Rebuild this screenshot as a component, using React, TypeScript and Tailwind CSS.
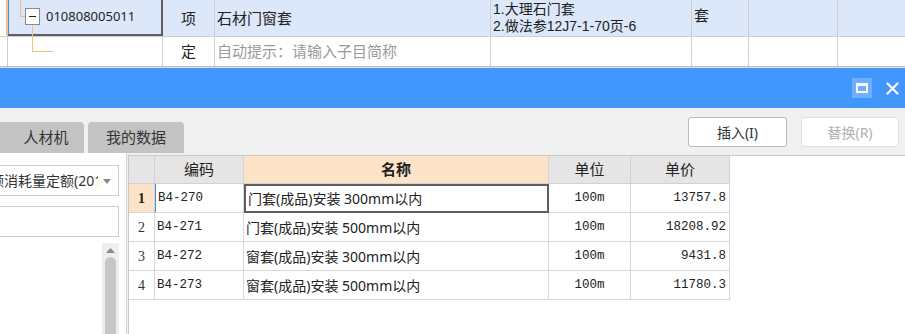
import React from "react";

const rows = [
  { no: "1", code: "B4-270", name: "门套(成品)安装 300mm以内", unit: "100m", price: "13757.8" },
  { no: "2", code: "B4-271", name: "门套(成品)安装 500mm以内", unit: "100m", price: "18208.92" },
  { no: "3", code: "B4-272", name: "窗套(成品)安装 300mm以内", unit: "100m", price: "9431.8" },
  { no: "4", code: "B4-273", name: "窗套(成品)安装 500mm以内", unit: "100m", price: "11780.3" },
];

const cjk = "font-['Noto_Sans','Noto_Sans_CJK_SC',sans-serif]";
const mono = "font-['Liberation_Mono','Noto_Sans_CJK_SC',monospace]";

const TreeLines = () => (
  <svg className="absolute left-0 top-0 pointer-events-none" width="60" height="68" viewBox="0 0 60 68">
    <line x1="20.5" y1="0" x2="20.5" y2="16.5" stroke="#f6bd7c" />
    <line x1="20" y1="16.5" x2="25" y2="16.5" stroke="#f6bd7c" />
    <rect x="25.5" y="8.5" width="14" height="16" fill="#fff" stroke="#8a8a8a" />
    <line x1="29" y1="16.5" x2="36" y2="16.5" stroke="#222" />
    <line x1="32.5" y1="25" x2="32.5" y2="51.5" stroke="#f6bd7c" />
    <line x1="32" y1="51.5" x2="53" y2="51.5" stroke="#f6bd7c" />
  </svg>
);

export default function App() {
  return (
    <div className={`relative w-[905px] h-[334px] overflow-hidden bg-[#f0f0f0] flex flex-col text-[#222] ${cjk}`}>
      {/* upper list */}
      <div className="relative bg-white">
        <div className="grid grid-cols-[8px_155px_52px_276px_201px_57px_89px_1fr] h-[37px] bg-[#dce8fa] border-b border-[#cfcfcf]">
          <div className="bg-white border-r-2 border-[#f6c189]" />
          <div className="border-l border-[#3b8fe8] border-r-2 border-b-2 border-r-[#5e5e5e] border-b-[#5e5e5e] flex items-center pl-[37px] text-[13px]">
            010808005011
          </div>
          <div className="border-r border-[#cfcfcf] flex items-center justify-center text-[15px]">项</div>
          <div className="border-r border-[#cfcfcf] flex items-center pl-[2px] text-[15px]">石材门窗套</div>
          <div className="border-r border-[#cfcfcf] overflow-hidden pl-[2px] pt-[1px] font-['Liberation_Sans','Noto_Sans_CJK_SC',sans-serif] text-[14px] leading-[17px] whitespace-nowrap">
            1.大理石门套
            <br />
            2.做法参12J7-1-70页-6
          </div>
          <div className="border-r border-[#cfcfcf] pl-[2px] pt-[4px] text-[15px]">套</div>
          <div className="border-r border-[#cfcfcf]" />
          <div />
        </div>
        <div className="grid grid-cols-[8px_155px_52px_276px_201px_57px_89px_1fr] h-[30px] border-b border-[#bdbdbd]">
          <div className="border-r border-[#cfcfcf]" />
          <div className="border-r border-[#cfcfcf]" />
          <div className="border-r border-[#cfcfcf] flex items-center justify-center text-[15px]">定</div>
          <div className="border-r border-[#cfcfcf] flex items-center pl-[2px] text-[15px] text-[#9a9a9a]">
            自动提示：请输入子目简称
          </div>
          <div className="border-r border-[#cfcfcf]" />
          <div className="border-r border-[#cfcfcf]" />
          <div className="border-r border-[#cfcfcf]" />
          <div />
        </div>
        <TreeLines />
      </div>
      <div className="h-[1px] bg-[#dfe6ee]" />

      {/* dialog title bar */}
      <div className="h-[40px] bg-[#4197fc] flex items-center justify-end pr-[5px] gap-[14px]">
        <div className="w-[20px] h-[20px] bg-[#6cb0fd] flex items-center justify-center">
          <div className="w-[12px] h-[10px] border-2 border-t-[3px] border-white" />
        </div>
        <svg width="13" height="13" viewBox="0 0 13 13" className="mr-[1px]">
          <path d="M1.5 1.5 L11.5 11.5 M11.5 1.5 L1.5 11.5" stroke="#fff" strokeWidth="2.2" strokeLinecap="round" />
        </svg>
      </div>

      {/* toolbar */}
      <div className="h-[45px] flex items-end justify-between">
        <div className="flex gap-[4px]">
          <div className="w-[84px] h-[31px] bg-[#c3c3c3] rounded-tr-[4px] flex items-center justify-center pl-[8px] text-[15px] text-[#333]">
            人材机
          </div>
          <div className="w-[96px] h-[31px] bg-[#c3c3c3] rounded-t-[4px] flex items-center justify-center text-[15px] text-[#333]">
            我的数据
          </div>
        </div>
        <div className="flex gap-[14px] self-start mt-[9px] pr-[6px]">
          <button className="w-[99px] h-[30px] bg-white border border-[#bcbcbc] rounded-[3px] text-[14px] text-[#333]">
            插入(I)
          </button>
          <button className="w-[98px] h-[30px] bg-white border border-[#e0e0e0] rounded-[3px] text-[14px] text-[#b0b0b0]">
            替换(R)
          </button>
        </div>
      </div>

      {/* body */}
      <div className="flex-1 flex min-h-0">
        <div className="w-[127px] bg-white border-r border-[#d4d4d4] flex flex-col pt-[12px]">
          <div className="w-[119px] h-[31px] border border-[#cdcdcd] border-l-0 flex items-center overflow-hidden relative">
            <div className="w-[98px] overflow-hidden whitespace-nowrap text-[14px] text-[#333]">
              <span className="-ml-[10px] inline-block">额消耗量定额(2014)</span>
            </div>
            <svg width="8" height="5" viewBox="0 0 8 5" className="absolute right-[7px] top-[13px]">
              <path d="M0 0 H8 L4 5 Z" fill="#8a8a8a" />
            </svg>
          </div>
          <div className="mt-[10px] w-[119px] h-[31px] border border-[#cdcdcd] border-l-0" />
          <div className="flex-1 flex justify-end pr-[7px] mt-[6px]">
            <div className="w-[17px] bg-[#eeeeee] flex flex-col items-center">
              <svg width="9" height="5" viewBox="0 0 9 5" className="mt-[5px]">
                <path d="M0 5 L4.5 0 L9 5 Z" fill="#8a8a8a" />
              </svg>
              <div className="mt-[4px] w-[11px] flex-1 bg-[#c6c6c6] rounded-t-[6px]" />
            </div>
          </div>
        </div>

        <div className="flex-1 mt-[2px] ml-[1px] bg-white border-l border-t border-[#c9c9c9]">
          <div className="grid grid-cols-[26px_89px_305px_82px_99px] h-[28px] text-[15px] w-[601px]">
            <div className="bg-[#e5e5e5] border-r border-b border-[#d2d2d2]" />
            <div className="bg-[#e5e5e5] border-r border-b border-[#d2d2d2] flex items-center justify-center">编码</div>
            <div className="bg-[#fde4c8] border-r border-b border-[#d2d2d2] flex items-center justify-center font-bold">名称</div>
            <div className="bg-[#e5e5e5] border-r border-b border-[#d2d2d2] flex items-center justify-center">单位</div>
            <div className="bg-[#e5e5e5] border-r border-b border-[#d2d2d2] flex items-center justify-center">单价</div>
          </div>
          {rows.map((r, i) => (
            <div key={r.no} className="grid grid-cols-[26px_89px_305px_82px_99px] h-[29px] w-[601px]">
              <div
                className={`border-r border-b border-[#d6d6d6] flex items-center justify-center font-['Liberation_Serif',serif] text-[14px] ${
                  i === 0 ? "bg-[#fde4c8] font-bold" : "text-[#333]"
                }`}>
                {r.no}
              </div>
              <div
                className={`border-r border-b border-[#d6d6d6] flex items-center pl-[2px] ${mono} text-[12.5px] ${
                  i === 0 ? "border-l border-l-[#3b8fe8]" : ""
                }`}>
                {r.code}
              </div>
              <div
                className={`flex items-center pl-[2px] text-[14px] whitespace-nowrap ${
                  i === 0 ? "border-2 border-[#5e5e5e]" : "border-r border-b border-[#d6d6d6]"
                }`}>
                {r.name}
              </div>
              <div className={`border-r border-b border-[#d6d6d6] flex items-center justify-center ${mono} text-[12.5px]`}>
                {r.unit}
              </div>
              <div className={`border-r border-b border-[#d6d6d6] flex items-center justify-end pr-[3px] ${mono} text-[12.5px]`}>
                {r.price}
              </div>
            </div>
          ))}
        </div>
      </div>
    </div>
  );
}
